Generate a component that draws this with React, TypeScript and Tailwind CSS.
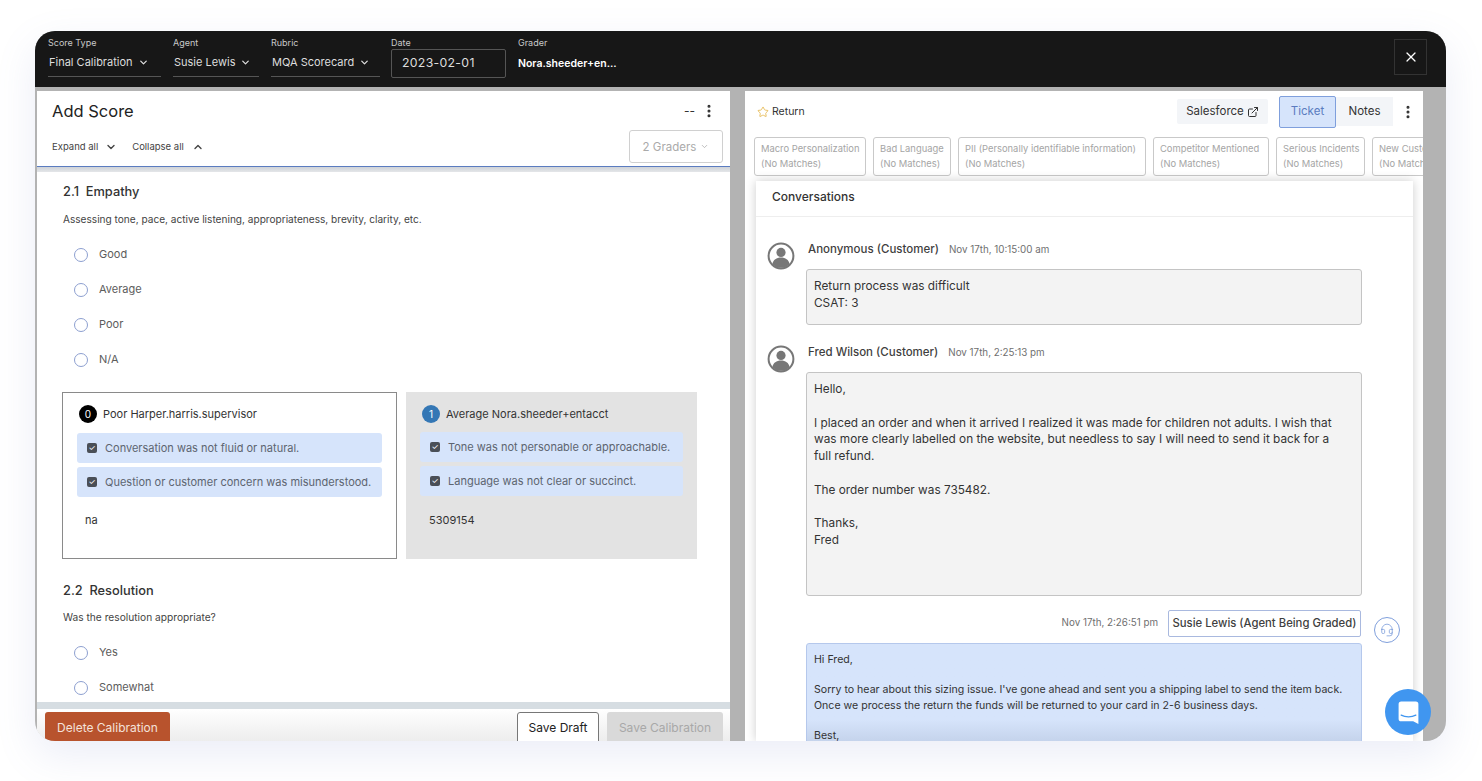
import { ChevronDown, ChevronUp, EllipsisVertical, ExternalLink, Headset, Star, X } from "lucide-react"

const font = { fontFamily: "Inter, 'Open Sans', sans-serif" }

const filters = [
  { label: "Score Type", value: "Final Calibration", width: "w-[113px] mr-[12px]" },
  { label: "Agent", value: "Susie Lewis", width: "w-[86px] mr-[12px]" },
  { label: "Rubric", value: "MQA Scorecard", width: "w-[109px] mr-[11px]" },
]

const chips = [
  { name: "Macro Personalization", width: "w-[112px]" },
  { name: "Bad Language", width: "w-[78px]" },
  { name: "PII (Personally identifiable information)", width: "w-[188px]" },
  { name: "Competitor Mentioned", width: "w-[116px]" },
  { name: "Serious Incidents", width: "w-[89px]" },
  { name: "New Customer", width: "w-[72px]" },
]

function Radio({ label }: { label: string }) {
  return (
    <div className="flex h-[35px] items-center gap-[11px] pl-[37px]">
      <span className="h-[14px] w-[14px] rounded-full border border-[#8d9fd0] bg-white" />
      <span className="text-[11px] text-[#5c5c5c]">{label}</span>
    </div>
  )
}

function Reason({ text }: { text: string }) {
  return (
    <div className="flex h-[30px] items-center gap-[8px] rounded-[3px] bg-[#d6e4fb] pl-[10px] text-[11px] whitespace-nowrap text-[#5d6470]">
      <span className="flex h-[10px] w-[10px] shrink-0 items-center justify-center rounded-[2px] bg-[#4a4f57] text-[8px] leading-none text-white">✓</span>
      {text}
    </div>
  )
}

function Avatar() {
  return (
    <svg viewBox="0 0 28 28" className="h-[28px] w-[28px] shrink-0">
      <circle cx="14" cy="14" r="12.4" fill="none" stroke="#777" strokeWidth="2" />
      <circle cx="14" cy="10.4" r="4.6" fill="#777" />
      <path d="M5.4 22.2c.8-4.4 4.2-6.6 8.6-6.6s7.8 2.2 8.6 6.6a12 12 0 0 1-17.2 0z" fill="#777" />
    </svg>
  )
}

function Customer({ name, time, lines, height }: { name: string; time: string; lines: string[]; height: string }) {
  return (
    <div className="flex gap-[11px] pl-[11px]">
      <div className="pt-[6px]">
        <Avatar />
      </div>
      <div>
        <div className="mt-[2px] flex h-[24px] items-center gap-[10px] pl-[2px]">
          <span className="text-[11.5px] font-medium text-[#3f3f3f]">{name}</span>
          <span className="text-[9.8px] text-[#6f6f6f]">{time}</span>
        </div>
        <div className={`mt-[7px] w-[556px] rounded-[3px] border border-[#c4c4c4] bg-[#f3f3f3] px-[7px] pt-[8px] text-[11.8px] leading-[16.8px] text-[#333] ${height}`}>
          {lines.map((l, i) => (
            <div key={i} className="min-h-[16.8px]">{l}</div>
          ))}
        </div>
      </div>
    </div>
  )
}

export default function App() {
  return (
    <div style={font} className="relative h-[781px] w-[1482px] overflow-hidden bg-white pt-[31px] pl-[35px]">
      <div className="flex h-[710px] w-[1411px] flex-col overflow-hidden rounded-[20px] bg-[#b3b3b3] shadow-[0_14px_40px_rgba(110,130,200,0.14)]">
        {/* Top filter bar */}
        <div className="flex h-[56px] shrink-0 items-start bg-[#171717] pl-[13px] text-white">
          {filters.map((f) => (
            <div key={f.label} className={`mt-[6px] h-[40px] border-b border-[#555] ${f.width}`}>
              <div className="text-[9px] leading-[11px] text-[#c9c9c9]">{f.label}</div>
              <div className="mt-[7px] flex items-center gap-[5px] pl-[1px] text-[11px] leading-[14px] text-[#ddd]">
                {f.value}
                <ChevronDown className="h-[11px] w-[11px]" strokeWidth={2.8} />
              </div>
            </div>
          ))}
          <div className="mt-[6px] w-[115px]">
            <div className="text-[9px] leading-[11px] text-[#c9c9c9]">Date</div>
            <div className="mt-[1px] flex h-[29px] items-center rounded-[2px] border border-[#555] pl-[10px] text-[12.3px] tracking-[0.3px] text-[#ddd]">2023-02-01</div>
          </div>
          <div className="mt-[6px] ml-[12px]">
            <div className="text-[9px] leading-[11px] text-[#c9c9c9]">Grader</div>
            <div className="mt-[8px] text-[10.5px] font-semibold">Nora.sheeder+en...</div>
          </div>
          <div className="mt-[8px] mr-[19px] ml-auto flex h-[36px] w-[33px] items-center justify-center border border-[#333]">
            <X className="h-[16px] w-[16px]" strokeWidth={1.8} />
          </div>
        </div>

        <div className="flex min-h-0 flex-1 pt-[4px] pl-[2px]">
          {/* Left score panel */}
          <div className="flex w-[693px] shrink-0 flex-col bg-white">
            <div className="h-[76px] shrink-0 border-b-[1.5px] border-[#5b7cc0] px-[15px]">
              <div className="flex h-[40px] items-center justify-between">
                <span className="text-[16.5px] text-[#222]">Add Score</span>
                <div className="flex items-center gap-[6px] text-[#333]">
                  <span className="text-[12px]">--</span>
                  <EllipsisVertical className="-mr-[2px] h-[16px] w-[16px]" strokeWidth={2.6} />
                </div>
              </div>
              <div className="flex items-start justify-between">
                <div className="flex h-[32px] items-center text-[9.5px] text-[#444]">
                  Expand all
                  <ChevronDown className="ml-[7px] h-[12px] w-[12px]" strokeWidth={2.8} />
                  <span className="ml-[15px]">Collapse all</span>
                  <ChevronUp className="ml-[8px] h-[12px] w-[12px]" strokeWidth={2.8} />
                </div>
                <div className="-mt-[1px] -mr-[8px] flex h-[33px] w-[94px] items-center justify-center gap-[4px] rounded-[3px] border border-[#d0d0d0] pt-[3px] text-[11.5px] text-[#aaa]">
                  2 Graders
                  <ChevronDown className="mb-[3px] h-[9px] w-[9px]" />
                </div>
              </div>
            </div>
            <div className="h-[5px] shrink-0 bg-gradient-to-b from-[#cfd3d8] to-[#e4e6e9]" />
            <div className="h-[530px] shrink-0 overflow-hidden">
              <div className="pt-[11px] pl-[26px] text-[12.8px] leading-[17px] font-medium text-[#333]">2.1&nbsp; Empathy</div>
              <div className="pt-[12px] pb-[11px] pl-[26px] text-[10.1px] leading-[14px] text-[#444]">Assessing tone, pace, active listening, appropriateness, brevity, clarity, etc.</div>
              <Radio label="Good" />
              <Radio label="Average" />
              <Radio label="Poor" />
              <Radio label="N/A" />
              <div className="mt-[15px] flex gap-[9px] pl-[25px]">
                <div className="h-[167px] w-[335px] border border-[#8a8a8a] px-[14px]">
                  <div className="flex h-[40px] items-center gap-[6px] pt-[2px] pl-[2px] text-[11px] text-[#333]">
                    <span className="flex h-[18px] w-[18px] items-center justify-center rounded-full bg-black text-[10px] text-white">0</span>
                    Poor Harper.harris.supervisor
                  </div>
                  <div className="flex flex-col gap-[4px]">
                    <Reason text="Conversation was not fluid or natural." />
                    <Reason text="Question or customer concern was misunderstood." />
                  </div>
                  <div className="pt-[15px] pl-[8px] text-[11px] text-[#333]">na</div>
                </div>
                <div className="h-[167px] w-[291px] bg-[#e3e3e3] px-[14px]">
                  <div className="flex h-[40px] items-center gap-[6px] pt-[4px] pl-[2px] text-[11px] text-[#333]">
                    <span className="flex h-[18px] w-[18px] items-center justify-center rounded-full bg-[#3477b5] text-[10px] text-white">1</span>
                    Average Nora.sheeder+entacct
                  </div>
                  <div className="flex flex-col gap-[4px]">
                    <Reason text="Tone was not personable or approachable." />
                    <Reason text="Language was not clear or succinct." />
                  </div>
                  <div className="pt-[16px] pl-[9px] text-[11px] text-[#333]">5309154</div>
                </div>
              </div>
              <div className="pt-[23px] pl-[26px] text-[12.8px] leading-[17px] font-medium text-[#333]">2.2&nbsp; Resolution</div>
              <div className="pt-[11px] pb-[11px] pl-[26px] text-[10.2px] leading-[14px] text-[#444]">Was the resolution appropriate?</div>
              <Radio label="Yes" />
              <Radio label="Somewhat" />
            </div>
            <div className="h-[7px] shrink-0 bg-[#d6dde2]" />
            <div className="flex min-h-0 flex-1 items-start justify-between bg-gradient-to-b from-white to-[#ededed] pt-[3px] pr-[7px] pl-[8px] text-[12px]">
              <div className="flex h-[36px] w-[125px] items-start justify-center rounded-[3px] bg-[#b8532d] pt-[7px] text-[#f4e2da]">Delete Calibration</div>
              <div className="flex gap-[8px]">
                <div className="flex h-[36px] w-[82px] items-start justify-center rounded-[3px] border border-[#777] bg-white pt-[6px] text-[#222]">Save Draft</div>
                <div className="flex h-[36px] w-[116px] items-start justify-center rounded-[3px] bg-[#d9d9d9] pt-[7px] text-[#a8a8a8]">Save Calibration</div>
              </div>
            </div>
          </div>

          {/* Right ticket panel */}
          <div className="ml-[15px] flex w-[678px] shrink-0 flex-col overflow-hidden bg-white">
            <div className="flex h-[40px] shrink-0 items-center pt-[1px] pr-[7px] pl-[12px]">
              <Star className="h-[12px] w-[12px] text-[#e3b341]" strokeWidth={1.6} />
              <span className="ml-[3px] text-[10.5px] text-[#333]">Return</span>
              <div className="ml-auto flex h-[25px] w-[91px] items-center justify-center gap-[3px] rounded-[2px] bg-[#f3f5f8] text-[11.5px] text-[#333]">
                Salesforce
                <ExternalLink className="h-[12px] w-[12px]" />
              </div>
              <div className="ml-[11px] flex h-[32px] w-[57px] items-center justify-center rounded-[2px] border border-[#7f9fdc] bg-[#d6e4fb] text-[11.5px] text-[#5b7cc0]">Ticket</div>
              <div className="flex h-[29px] w-[57px] items-center justify-center bg-[#f3f5f8] text-[11.5px] text-[#333]">Notes</div>
              <EllipsisVertical className="ml-[7px] h-[16px] w-[16px] text-[#333]" strokeWidth={2.6} />
            </div>
            <div className="mt-[6px] flex h-[39px] shrink-0 gap-[7px] pl-[9px]">
              {chips.map((c) => (
                <div key={c.name} className={`h-[39px] shrink-0 rounded-[3px] border border-[#c9c9c9] pt-[3px] pl-[6px] text-[9.4px] leading-[15px] text-[#a5a5a5] ${c.width}`}>
                  <div className="truncate">{c.name}</div>
                  <div className="truncate">(No Matches)</div>
                </div>
              ))}
            </div>
            <div className="mt-[5px] ml-[11px] min-h-0 w-[657px] flex-1 overflow-hidden shadow-[0_0_10px_rgba(0,0,0,0.2)]">
              <div className="flex h-[36px] items-center border-b border-[#eee] pb-[4px] pl-[16px] text-[12px] font-medium text-[#333]">Conversations</div>
              <div className="pt-[19px]">
                <Customer name="Anonymous (Customer)" time="Nov 17th, 10:15:00 am" lines={["Return process was difficult", "CSAT: 3"]} height="h-[56px]" />
                <div className="h-[14px]" />
                <Customer
                  name="Fred Wilson (Customer)"
                  time="Nov 17th, 2:25:13 pm"
                  lines={[
                    "Hello,",
                    "",
                    "I placed an order and when it arrived I realized it was made for children not adults. I wish that",
                    "was more clearly labelled on the website, but needless to say I will need to send it back for a",
                    "full refund.",
                    "",
                    "The order number was 735482.",
                    "",
                    "Thanks,",
                    "Fred",
                  ]}
                  height="h-[224px]"
                />
                <div className="flex h-[41px] items-end pr-[13px]">
                  <div className="ml-auto flex items-start">
                    <span className="mr-[10px] self-center text-[9.8px] text-[#6f6f6f]">Nov 17th, 2:26:51 pm</span>
                    <div className="flex h-[27px] w-[193px] items-center justify-center rounded-[2px] border border-[#a9b9df] text-[11.3px] font-medium text-[#3f3f3f]">Susie Lewis (Agent Being Graded)</div>
                    <div className="mt-[7px] -mb-[6px] ml-[13px] flex h-[26px] w-[26px] items-center justify-center rounded-full border border-[#7f9fdc]">
                      <Headset className="h-[14px] w-[14px] text-[#7f9fdc]" strokeWidth={1.4} />
                    </div>
                  </div>
                </div>
                <div className="mt-[6px] ml-[50px] h-[110px] w-[556px] rounded-[3px] border border-[#b5c8ec] bg-gradient-to-b from-[#d6e4fb] from-70% to-[#bccbe4] px-[7px] pt-[8px] text-[10.6px] leading-[16px] text-[#333]">
                  <div>Hi Fred,</div>
                  <div className="min-h-[14px]" />
                  <div>Sorry to hear about this sizing issue. I've gone ahead and sent you a shipping label to send the item back.</div>
                  <div>Once we process the return the funds will be returned to your card in 2-6 business days.</div>
                  <div className="min-h-[14px]" />
                  <div>Best,</div>
                </div>
              </div>
            </div>
          </div>
        </div>
      </div>

      {/* Chat launcher */}
      <div className="absolute top-[689px] left-[1385px] flex h-[46px] w-[46px] items-center justify-center rounded-full bg-[#4096f0]">
        <svg viewBox="0 0 24 24" className="h-[25px] w-[25px]">
          <path d="M5 1.5h14A2.5 2.5 0 0 1 21.5 4v19l-5-2.5H5A2.5 2.5 0 0 1 2.5 18V4A2.5 2.5 0 0 1 5 1.5z" fill="#fff" />
          <path d="M5 14.5c4 2.2 10 2.2 14 0" fill="none" stroke="#4096f0" strokeWidth="1.3" strokeLinecap="round" />
        </svg>
      </div>
    </div>
  )
}
